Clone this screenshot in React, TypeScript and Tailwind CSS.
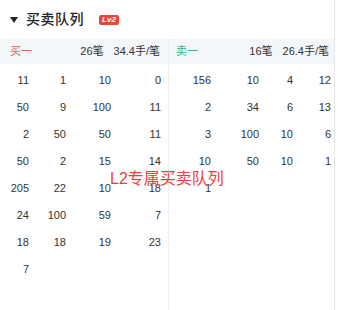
const font = { fontFamily: '"Liberation Sans", "Noto Sans CJK SC", sans-serif' };

const buyRows: number[][] = [
  [11, 1, 10, 0],
  [50, 9, 100, 11],
  [2, 50, 50, 11],
  [50, 2, 15, 14],
  [205, 22, 10, 18],
  [24, 100, 59, 7],
  [18, 18, 19, 23],
  [7],
];

const sellRows: number[][] = [
  [156, 10, 4, 12],
  [2, 34, 6, 13],
  [3, 100, 10, 6],
  [10, 50, 10, 1],
  [1],
];

export default function App() {
  return (
    <div className="relative w-[338px] h-[310px] bg-white overflow-hidden" style={font}>
      <div className="w-[335px] h-full border-r border-[#e6e6e6] flex flex-col">
        {/* Header */}
        <div className="h-[39px] flex items-center pl-[10px] shrink-0">
          <svg width="8" height="6" viewBox="0 0 8 6" className="mr-[8px]">
            <path d="M0 0 L8 0 L4 6 Z" fill="#222" />
          </svg>
          <span className="text-[14px] text-[#222] font-medium tracking-[0.5px]">买卖队列</span>
          <span className="ml-[15px] h-[10px] w-[20px] rounded-[2px] bg-[#e8453c] text-white text-[8px] leading-[10px] italic font-bold flex items-center justify-center">
            Lv2
          </span>
        </div>

        <div className="flex flex-1">
          {/* Buy side */}
          <div className="w-[169px] border-r border-[#ececec] flex flex-col">
            <div className="h-[25px] bg-[#f4f7fa] flex items-center text-[11px] text-[#333] pl-[10px] pr-[8px]">
              <span className="text-[#e86060]">买一</span>
              <span className="ml-auto">26笔</span>
              <span className="ml-[10px]">34.4手/笔</span>
            </div>
            <div className="pt-[3px]">
              {buyRows.map((r, i) => (
                <div key={i} className="h-[27px] grid grid-cols-[29px_37px_45px_50px] items-center text-[11px] text-[#333]">
                  {r.map((v, j) => (
                    <span key={j} className="text-right">{v}</span>
                  ))}
                </div>
              ))}
            </div>
          </div>

          {/* Sell side */}
          <div className="flex-1 flex flex-col">
            <div className="h-[25px] bg-[#f4f7fa] flex items-center text-[11px] text-[#333] pl-[7px] pr-[5px]">
              <span className="text-[#38b08c]">卖一</span>
              <span className="ml-auto">16笔</span>
              <span className="ml-[10px]">26.4手/笔</span>
            </div>
            <div className="pt-[3px]">
              {sellRows.map((r, i) => (
                <div key={i} className="h-[27px] grid grid-cols-[42px_48px_34px_38px] items-center text-[11px] text-[#333]">
                  {r.map((v, j) => (
                    <span key={j} className="text-right">{v}</span>
                  ))}
                </div>
              ))}
            </div>
          </div>
        </div>
      </div>

      {/* Overlay */}
      <div className="absolute left-[110px] top-[169px] text-[16px] leading-[20px] text-[#f23c3c]">
        L2专属买卖队列
      </div>
    </div>
  );
}
